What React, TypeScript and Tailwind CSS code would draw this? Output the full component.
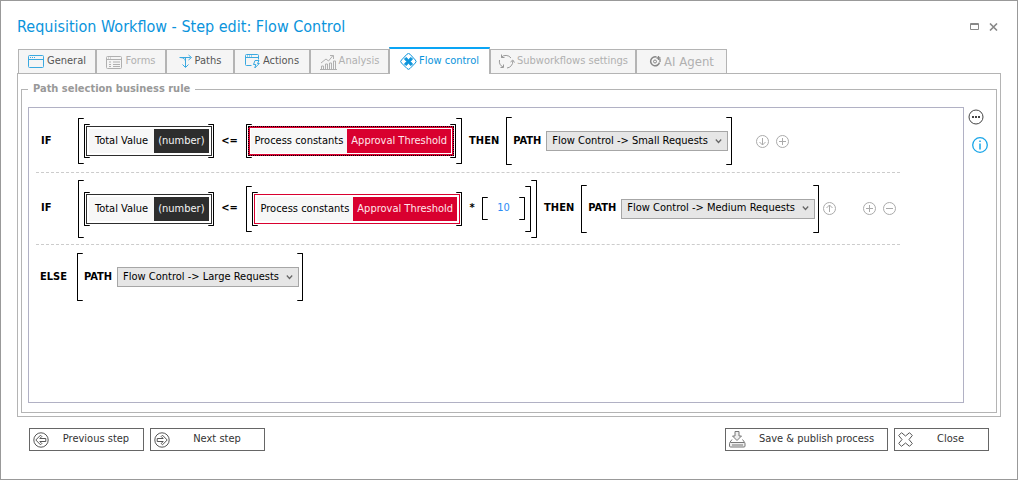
import type { ReactNode } from "react";

type IconProps = { className?: string };

function WindowIcon() {
  return (
    <svg width="17" height="16" viewBox="0 0 17 16" fill="none" stroke="currentColor">
      <rect x="0.5" y="1.5" width="15" height="12" rx="1" />
      <path d="M1 5.5h14M2 3.5h1M4 3.5h1M6 3.5h1" />
    </svg>
  );
}

function FormsIcon() {
  return (
    <svg width="17" height="16" viewBox="0 0 17 16" fill="none" stroke="currentColor">
      <rect x="0.5" y="2.5" width="15" height="12" rx="1" />
      <path d="M1 5.5h14M2 4h1M4 4h1M3 8h2M7 8h7M3 10.5h2M7 10.5h7M3 12.5h2M7 12.5h7" />
    </svg>
  );
}

function PathsIcon() {
  return (
    <svg width="14" height="16" viewBox="0 0 14 16" fill="none" stroke="currentColor">
      <path d="M0.5 3.5h11M9.5 1l3 2.5-3 2.5M6.5 4v9M3.5 10.5l3 3 3-3M1 3.5c3.500 0 5.500 1.500 5.500 4" />
    </svg>
  );
}

function ActionsIcon() {
  return (
    <svg width="16" height="17" viewBox="0 0 16 17" fill="none" stroke="currentColor">
      <path d="M6.500 12.500H1.500a1 1 0 0 1-1-1v-9a1 1 0 0 1 1-1h11a1 1 0 0 1 1 1v4M1 4.500h12M2 3h1M4 3h1M6 3h1" />
      <path d="M10 7.500h4l-1.500 3h1.800L9.800 15l1-3.500H8.500z" />
    </svg>
  );
}

function AnalysisIcon() {
  return (
    <svg width="17" height="16" viewBox="0 0 17 16" fill="none" stroke="currentColor">
      <path d="M1.500 15v-3h2v3M5.500 15v-5h2v5M9.500 15V9h2v6M13.500 15V7h2v8M0 15.500h17M1 9l5-4 2.500 2L13 1.500M10 1.500h3.500V5" />
    </svg>
  );
}

function FlowIcon() {
  return (
    <svg width="17" height="17" viewBox="0 0 17 17" fill="none" stroke="currentColor">
      <path d="M7 1.200a2 2 0 0 1 3 0L15.300 7a2 2 0 0 1 0 3L10 15.500a2 2 0 0 1-3 0L1.500 10a2 2 0 0 1 0-3z" />
      <path
        d="M6 4.500l2.500 2.200L11 4.500l1.500 1.500-2.200 2.500 2.200 2.500-1.500 1.500-2.500-2.200L6 12.500 4.500 11l2.200-2.500L4.500 6z"
        fill="currentColor"
      />
    </svg>
  );
}

function CycleIcon() {
  return (
    <svg width="17" height="17" viewBox="0 0 17 17" fill="none" stroke="#999999">
      <path d="M3 4.500A6.500 6.500 0 0 1 13 5M14.800 8A6.500 6.500 0 0 1 9 15M5 14A6.500 6.500 0 0 1 1.500 7" />
      <path d="M3.500 1.500v3h3M12.500 9l2.300-2 1.700 2.500M2.500 14.500h3v-3" />
    </svg>
  );
}

function AgentIcon() {
  return (
    <svg width="13" height="13" viewBox="0 0 13 13" fill="none" stroke="#888888">
      <path d="M10.500 7.500a4.500 4.500 0 1 1-3-5.500" strokeWidth="1.500" />
      <circle cx="6" cy="6.500" r="1.500" />
      <path d="M9.500 1v4M7.500 3h4M11 4v3" strokeWidth="1.300" />
    </svg>
  );
}

function ArrowIcon({ className }: IconProps) {
  return (
    <svg className={className} width="16" height="16" viewBox="0 0 16 16" fill="none" stroke="currentColor">
      <circle cx="8" cy="8" r="7.200" />
      <path d="M7.500 3.200L2.800 8l4.700 4.800 1.300-1.300-2-2h6v-3h-6l2-2z" />
    </svg>
  );
}

function SaveIcon() {
  return (
    <svg width="17" height="17" viewBox="0 0 17 17" fill="none" stroke="#777777">
      <path d="M6 0.500h4V5h2.500L8 9.500 3.500 5H6z" fill="#eeeeee" />
      <path d="M3 8.500L0.800 11.500M13.500 8.500l2.200 3" />
      <rect x="0.500" y="11.500" width="15.500" height="4.500" rx="1" fill="#eeeeee" />
      <path d="M3 14h11" />
    </svg>
  );
}

function CloseIcon() {
  return (
    <svg width="15" height="15" viewBox="0 0 15 15" fill="none" stroke="currentColor">
      <path d="M3.500 0.700L7.500 4l4-3.300 2.800 2.800L11 7.500l3.300 4-2.800 2.800-4-3.300-4 3.300L0.700 11.500 4 7.500l-3.300-4z" strokeLinejoin="round" />
    </svg>
  );
}

const glyphs = {
  down: "M6.500 3v7M3.500 7l3 3 3-3",
  up: "M6.500 10V3M3.500 6l3-3 3 3",
  plus: "M6.500 3v7M3 6.500h7",
  minus: "M3 6.500h7",
};

function RoundButton({ glyph, label }: { glyph: keyof typeof glyphs; label: string }) {
  return (
    <button aria-label={label} className="text-[#aaaaaa]">
      <svg width="13" height="13" viewBox="0 0 13 13" fill="none" stroke="currentColor">
        <circle cx="6.500" cy="6.500" r="6" />
        <path d={glyphs[glyph]} />
      </svg>
    </button>
  );
}

function Bracket({ className = "", children }: { className?: string; children: ReactNode }) {
  return (
    <div className="grid">
      <span className="col-start-1 row-start-1 w-1.5 justify-self-start rounded-[1px] border-y border-l border-black" />
      <span className="col-start-1 row-start-1 w-1.5 justify-self-end rounded-[1px] border-y border-r border-black" />
      <div className={`z-10 col-start-1 row-start-1 flex items-center ${className}`}>{children}</div>
    </div>
  );
}

function TotalValue() {
  return (
    <div className="flex border border-[#2d2d2d] bg-white p-0.5">
      <span className="bg-[#f7f7f7] px-1.5 leading-6">Total Value</span>
      <span className="bg-[#2d2d2d] px-1 leading-6 text-[#f5f5f5]">(number)</span>
    </div>
  );
}

function Threshold({ selected }: { selected?: boolean }) {
  return (
    <div className={selected ? "border border-dotted border-black bg-[#d9002f] p-px" : "border border-[#d9002f] bg-white p-0.5"}>
      <div className={selected ? "flex bg-white p-px" : "flex bg-white"}>
        <span className="bg-[#f7f7f7] px-1 leading-6">Process constants</span>
        <span className="bg-[#d9002f] px-1 leading-6 text-[#ffe6eb]">Approval Threshold</span>
      </div>
    </div>
  );
}

const paths = ["Small Requests", "Medium Requests", "Large Requests"];

function PathSelect({ value, id, className = "" }: { value: string; id: string; className?: string }) {
  return (
    <Bracket className="h-12 pr-1 pl-[7px]">
      <label htmlFor={id} className="mr-[5px] font-bold">PATH</label>
      <div className="relative flex items-center">
        <select
          id={id}
          defaultValue={value}
          className={`h-5 appearance-none border border-[#a6a6a6] bg-[#e6e6e6] pl-[5px] ${className}`}
        >
          {paths.map((p) => (
            <option key={p} value={p}>{`Flow Control -> ${p}`}</option>
          ))}
        </select>
        <svg className="pointer-events-none absolute right-1.5" width="7" height="5" viewBox="0 0 7 5" fill="none" stroke="#666666">
          <path d="M0.800 0.500l2.700 3 2.700-3" strokeWidth="1.200" />
        </svg>
      </div>
    </Bracket>
  );
}

const tabs = [
  { label: "General", icon: <WindowIcon />, width: "w-[78px]" },
  { label: "Forms", icon: <FormsIcon />, width: "w-[70px]", disabled: true },
  { label: "Paths", icon: <PathsIcon />, width: "w-[68px]" },
  { label: "Actions", icon: <ActionsIcon />, width: "w-[76px]" },
  { label: "Analysis", icon: <AnalysisIcon />, width: "w-[79px]", disabled: true },
  { label: "Flow control", icon: <FlowIcon />, width: "w-[101px]", active: true },
  { label: "Subworkflows settings", icon: <CycleIcon />, width: "w-[146px]", disabled: true },
  { label: "AI Agent", icon: <AgentIcon />, width: "w-[91px] text-[13px]", disabled: true },
];

function Tabs() {
  return (
    <div role="tablist" className="flex items-end pl-px text-[11px]">
      {tabs.map((t) => {
        if (t.active) {
          return (
            <button
              key={t.label}
              role="tab"
              aria-selected
              className={`z-10 -mb-px flex h-[27px] items-center justify-center gap-0.5 border-x border-t-2 border-x-[#b4b4b4] border-t-[#0aa5f5] bg-white text-[#0a94dc] ${t.width}`}
            >
              {t.icon}
              {t.label}
            </button>
          );
        }
        return (
          <button
            key={t.label}
            role="tab"
            aria-selected={false}
            disabled={t.disabled}
            className={`flex h-6 items-center justify-center gap-0.5 border-x border-t border-[#b4b4b4] bg-[#f5f5f5] ${t.disabled ? "text-[#b0b0b0]" : "text-[#555555]"} ${t.width}`}
          >
            <span className={t.disabled ? "" : "text-[#3aa9e0]"}>{t.icon}</span>
            {t.label}
          </button>
        );
      })}
    </div>
  );
}

function FooterButton({ icon, label, width }: { icon: ReactNode; label: string; width: string }) {
  return (
    <button className={`flex h-[23px] items-center border border-[#666666] bg-white pl-[3px] text-[11px] text-[#333333] ${width}`}>
      <span className="text-[#555555]">{icon}</span>
      <span className="flex-1 text-center">{label}</span>
    </button>
  );
}

export default function App() {
  return (
    <div className="flex min-h-screen flex-col border border-[#999999] bg-white px-4 pb-7 font-['DejaVu_Sans_Condensed','Noto_Sans',sans-serif] whitespace-nowrap text-black">
      <header className="flex h-[46px] items-center justify-between pt-1.5 pr-[3px]">
        <h1 className="text-base text-[#0a94dc]">Requisition Workflow - Step edit: Flow Control</h1>
        <div className="flex items-center gap-2.5 text-[#888888]">
          <button aria-label="Maximize">
            <svg width="9" height="8" viewBox="0 0 9 8" fill="none" stroke="currentColor">
              <path d="M0.500 0.500h8v6h-8zM0 1.500h9" />
            </svg>
          </button>
          <button aria-label="Close window">
            <svg width="9" height="8" viewBox="0 0 9 8" fill="none" stroke="currentColor" strokeWidth="1.600">
              <path d="M1 0.500l7 7M8 0.500l-7 7" />
            </svg>
          </button>
        </div>
      </header>

      <Tabs />
      <main className="flex flex-1 flex-col border border-[#b4b4b4] px-[3px] pt-[7px] pb-[3px]">
        <fieldset className="flex flex-1 items-start border border-[#b4b4b4] pr-2 pb-[9px] pl-1.5">
          <legend className="ml-0 px-[5px] text-[11px] leading-4 font-bold text-[#999999]">
            Path selection business rule
          </legend>
          <div className="mt-2.5 min-h-74 flex-1 border border-[#b1b1c4] pr-[63px] pl-[7px] text-[11px]">
            <div className="flex h-[65px] items-center border-b border-dashed border-[#cccccc] pt-0.5 pl-[5px]">
              <span className="w-[37px] font-bold">IF</span>
              <Bracket className="px-1.5 py-1.5">
                <Bracket className="p-0.5">
                  <TotalValue />
                </Bracket>
                <span className="w-8 text-center font-bold">&lt;=</span>
                <Bracket className="p-0.5">
                  <Threshold selected />
                </Bracket>
              </Bracket>
              <span className="mx-[7px] font-bold">THEN</span>
              <PathSelect id="path-small" value="Small Requests" className="w-[182px]" />
              <div className="ml-6 flex gap-[7px]">
                <RoundButton glyph="down" label="Move down" />
                <RoundButton glyph="plus" label="Add condition" />
              </div>
            </div>

            <div className="flex h-[72px] items-center border-b border-dashed border-[#cccccc] pl-[5px]">
              <span className="w-[37px] font-bold">IF</span>
              <Bracket className="px-1.5 py-1.5">
                <Bracket className="p-0.5">
                  <TotalValue />
                </Bracket>
                <span className="w-8 text-center font-bold">&lt;=</span>
                <Bracket className="px-1.5 py-1.5">
                  <Bracket className="p-0.5">
                    <Threshold />
                  </Bracket>
                  <span className="w-5 text-center font-bold">*</span>
                  <Bracket className="h-[23px]">
                    <input aria-label="Multiplier" defaultValue="10" className="w-[43px] text-center text-[#2b8cf5]" />
                  </Bracket>
                </Bracket>
              </Bracket>
              <span className="mx-[7px] font-bold">THEN</span>
              <PathSelect id="path-medium" value="Medium Requests" className="w-[194px]" />
              <div className="ml-1 flex gap-[7px]">
                <RoundButton glyph="up" label="Move up" />
                <span className="w-[13px]" />
                <RoundButton glyph="plus" label="Add condition" />
                <RoundButton glyph="minus" label="Remove condition" />
              </div>
            </div>

            <div className="flex h-16 items-center pl-1">
              <span className="w-[37px] font-bold">ELSE</span>
              <PathSelect id="path-large" value="Large Requests" className="w-[182px]" />
            </div>
          </div>
          <div className="mt-3 ml-1 flex w-5 flex-col items-start gap-3">
            <button aria-label="More options">
              <svg width="16" height="16" viewBox="0 0 16 16" fill="none" stroke="#444444">
                <circle cx="8" cy="8" r="7" />
                <path d="M4 8h2M7 8h2M10 8h2" strokeWidth="1.800" />
              </svg>
            </button>
            <button aria-label="Information" className="ml-1">
              <svg width="16" height="16" viewBox="0 0 16 16" fill="none" stroke="#18a5e8">
                <circle cx="8" cy="8" r="7.300" strokeWidth="1.300" />
                <path d="M8 3.500v1.500M8 6.500v6" strokeWidth="1.500" />
              </svg>
            </button>
          </div>
        </fieldset>
      </main>

      <footer className="mt-[11px] flex gap-1.5 px-3">
        <FooterButton icon={<ArrowIcon />} label="Previous step" width="w-[115px]" />
        <FooterButton icon={<ArrowIcon className="rotate-180" />} label="Next step" width="w-[115px]" />
        <span className="flex-1" />
        <FooterButton icon={<SaveIcon />} label="Save & publish process" width="w-[163px]" />
        <FooterButton icon={<CloseIcon />} label="Close" width="w-[95px]" />
      </footer>
    </div>
  );
}
